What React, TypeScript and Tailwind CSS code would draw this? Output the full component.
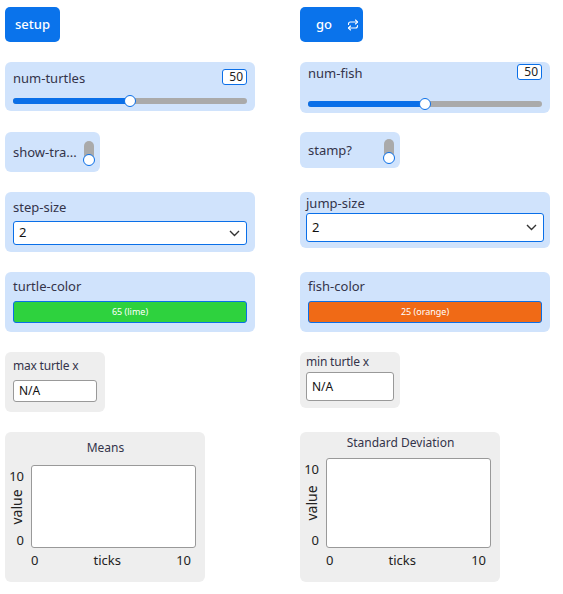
import { Repeat } from "lucide-react";

const font = { fontFamily: '"Noto Sans", "Open Sans", sans-serif' };

function Slider({ label, value, pct, top, barTop, cls }: { label: string; value: string; pct: number; top: string; barTop: string; cls: string }) {
  return (
    <div className={`relative w-[250px] rounded-[6px] bg-[#d0e3fc] px-2 ${cls}`}>
      <div className={`flex items-start justify-between ${top}`}>
        <span className="text-[13px] leading-[16px] text-[#34344a]">{label}</span>
        <span className="mt-[-1px] h-[16px] w-[25px] rounded-[3px] border border-[#0a6fe8] bg-white pr-[3px] text-right text-[12px] leading-[14px] text-[#222]">
          {value}
        </span>
      </div>
      <div className={`relative h-[6px] rounded-full bg-[#aaaaaa] ${barTop}`}>
        <div className="h-full rounded-full bg-[#0a6fe8]" style={{ width: `${pct}%` }} />
        <div
          className="absolute top-[-3px] h-[12px] w-[12px] -translate-x-1/2 rounded-full border-[1.5px] border-[#0a6fe8] bg-white"
          style={{ left: `${pct}%` }}
        />
      </div>
    </div>
  );
}

function Switch({ label, cls, w }: { label: string; cls: string; w: string }) {
  return (
    <div className={`flex items-center justify-between rounded-[6px] bg-[#d0e3fc] pl-2 pr-[6px] ${w} ${cls}`}>
      <span className="text-[13px] leading-[16px] text-[#34344a]">{label}</span>
      <div className="relative h-[22px] w-[10px] rounded-full bg-[#aaaaaa]">
        <div className="absolute bottom-[-3px] left-[-1px] h-[12px] w-[12px] rounded-full border-[1.5px] border-[#0a6fe8] bg-white" />
      </div>
    </div>
  );
}

function Chooser({ label, cls, boxCls }: { label: string; cls: string; boxCls: string }) {
  return (
    <div className={`w-[250px] rounded-[6px] bg-[#d0e3fc] ${cls}`}>
      <div className="text-[13px] leading-[16px] text-[#34344a]">{label}</div>
      <div className={`flex items-center justify-between rounded-[3px] border border-[#0a6fe8] bg-white pl-[5px] pr-[6px] text-[13px] text-[#111] ${boxCls}`}>
        <span>2</span>
        <svg width="11" height="7" viewBox="0 0 11 7" fill="none" stroke="#333" strokeWidth="1.4">
          <path d="M1 1l4.5 4.5L10 1" />
        </svg>
      </div>
    </div>
  );
}

function ColorInput({ label, text, color, cls }: { label: string; text: string; color: string; cls: string }) {
  return (
    <div className={`h-[60px] w-[250px] rounded-[6px] bg-[#d0e3fc] pt-[6px] ${cls}`}>
      <div className="text-[13px] leading-[16px] text-[#34344a]">{label}</div>
      <div
        className={`mt-[7px] flex h-[22px] items-center justify-center rounded-[3px] border border-[#0a6fe8] text-[9px] text-white ${color}`}
      >
        {text}
      </div>
    </div>
  );
}

function Monitor({ label, cls, boxCls }: { label: string; cls: string; boxCls: string }) {
  return (
    <div className={`w-[100px] rounded-[6px] bg-[#eeeeee] ${cls}`}>
      <div className="text-[12px] leading-[15px] tracking-[-0.2px] text-[#34344a]">{label}</div>
      <div className={`flex items-center rounded-[3px] border border-[#999] bg-white pl-[5px] text-[12px] text-[#111] ${boxCls}`}>
        N/A
      </div>
    </div>
  );
}

function Plot({ title, cls, areaH }: { title: string; cls: string; areaH: string }) {
  return (
    <div className={`flex h-[150px] w-[200px] flex-col rounded-[6px] bg-[#eeeeee] pr-[9px] ${cls}`}>
      <div className="pl-[10px] text-center text-[12px] leading-[15px] text-[#34344a]">{title}</div>
      <div className="flex">
        <div className={`relative w-[26px] text-[13px] text-[#222] ${areaH}`}>
          <span className="absolute right-[7px] top-[3px] leading-[16px]">10</span>
          <span className="absolute right-[7px] bottom-[0px] leading-[16px]">0</span>
          <span className="absolute left-[12px] top-1/2 -translate-x-1/2 -translate-y-1/2 -rotate-90 text-[14px] leading-[16px]">
            value
          </span>
        </div>
        <div className={`flex-1 rounded-[3px] border border-[#999] bg-white ${areaH}`} />
      </div>
      <div className="mt-[3px] flex justify-between pl-[26px] pr-[5px] text-[13px] leading-[18px] text-[#222]">
        <span>0</span>
        <span>ticks</span>
        <span>10</span>
      </div>
    </div>
  );
}

export default function App() {
  return (
    <div className="flex h-[594px] w-[563px] bg-white" style={font}>
      <div className="ml-[5px] flex w-[250px] flex-col items-start">
        <button className="mt-[7px] h-[35px] w-[55px] rounded-[5px] bg-[#0a73eb] text-[13px] font-medium text-white">setup</button>
        <Slider label="num-turtles" value="50" pct={50} cls="mt-[20px] h-[49px]" top="pt-[8px]" barTop="mt-[12px]" />
        <Switch label="show-tra..." cls="mt-[21px] h-[40px]" w="w-[95px]" />
        <Chooser label="step-size" cls="mt-[20px] h-[60px] px-2 pt-[7px]" boxCls="mt-[6px] h-[24px]" />
        <ColorInput label="turtle-color" text="65 (lime)" color="bg-[#2ed23e]" cls="mt-[20px] px-2" />
        <Monitor label="max turtle x" cls="mt-[20px] h-[60px] px-2 pt-[6px]" boxCls="mt-[7px] h-[22px] w-[84px]" />
        <Plot title="Means" cls="mt-[20px] pt-[8px]" areaH="mt-[10px] h-[83px]" />
      </div>
      <div className="ml-[45px] flex w-[250px] flex-col items-start">
        <button className="mt-[7px] flex h-[35px] w-[63px] items-center rounded-[5px] bg-[#0a73eb] pl-[16px] text-[13px] font-medium text-white">
          <span>go</span>
          <Repeat className="ml-[15px] h-[12px] w-[12px]" strokeWidth={2.2} />
        </button>
        <Slider label="num-fish" value="50" pct={50} cls="mt-[20px] h-[51px]" top="pt-[3px]" barTop="mt-[20px]" />
        <Switch label="stamp?" cls="mt-[19px] h-[36px]" w="w-[100px]" />
        <Chooser label="jump-size" cls="mt-[24px] h-[56px] px-[6px] pt-[3px]" boxCls="mt-[2px] h-[29px]" />
        <ColorInput label="fish-color" text="25 (orange)" color="bg-[#f06a16]" cls="mt-[24px] pl-2 pr-2" />
        <Monitor label="min turtle x" cls="mt-[20px] h-[56px] px-[6px] pt-[2px]" boxCls="mt-[3px] h-[29px] w-[88px]" />
        <Plot title="Standard Deviation" cls="mt-[24px] pt-[3px]" areaH="mt-[8px] h-[90px]" />
      </div>
    </div>
  );
}
